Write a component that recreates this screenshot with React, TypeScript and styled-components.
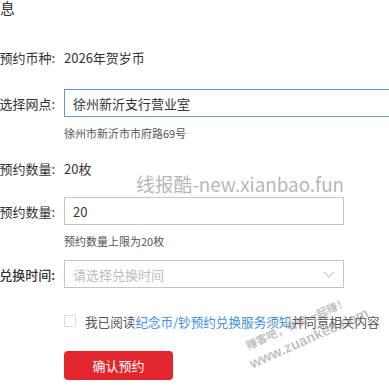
import { createGlobalStyle } from "styled-components"
import styled from "styled-components"

const GlobalStyle = createGlobalStyle`
  html, body {
    margin: 0;
    padding: 0;
    background: #fff;
    overflow: hidden;
  }
  body {
    font-family: "Noto Sans CJK SC", "Noto Sans", sans-serif;
    color: #333;
  }
`

const Page = styled.div`
  position: relative;
  width: 389px;
  height: 391px;
  overflow: hidden;
`

const Title = styled.div`
  font-size: 15px;
  line-height: 15px;
  color: #333;
`

const Row = styled.div<{ $mt: number }>`
  display: flex;
  align-items: center;
  margin-top: ${p => p.$mt}px;
  height: 28px;
  gap: 9px;
`

const Label = styled.div<{ $bold?: boolean }>`
  width: 55px;
  flex: none;
  display: flex;
  justify-content: flex-end;
  white-space: nowrap;
  font-size: 13px;
  color: #333;
  font-weight: ${p => (p.$bold ? 500 : 400)};
`

const Value = styled.div`
  font-size: 13px;
  color: #333;
  white-space: nowrap;
`

const Field = styled.div<{ $active?: boolean; $wide?: boolean }>`
  flex: none;
  box-sizing: border-box;
  width: ${p => (p.$wide ? 400 : 280)}px;
  height: 28px;
  border: 1px solid ${p => (p.$active ? "#5b9bd5" : "#c4c4c4")};
  display: flex;
  align-items: center;
  justify-content: space-between;
  padding: 0 8px 0 8px;
  font-size: 13px;
  color: #333;
  white-space: nowrap;
`

const Placeholder = styled.span`
  color: #bdbdbd;
`

const Hint = styled.div<{ $mt: number }>`
  margin-top: ${p => p.$mt}px;
  margin-left: 64px;
  font-size: 11px;
  line-height: 16px;
  color: #555;
  white-space: nowrap;
`

const AgreeRow = styled.label`
  display: flex;
  align-items: center;
  margin-top: 23px;
  margin-left: 64px;
  height: 20px;
  gap: 9px;
  font-size: 12.6px;
  color: #555;
  white-space: nowrap;
`

const Box = styled.span`
  width: 12px;
  height: 12px;
  box-sizing: border-box;
  border: 1px solid #dcdcdc;
  border-radius: 1px;
  flex: none;
`

const Link = styled.span`
  color: #3f8ee6;
`

const Submit = styled.button`
  display: block;
  margin-top: 20px;
  margin-left: 64px;
  width: 109px;
  height: 29px;
  border: none;
  border-radius: 4px;
  background: #e3262d;
  color: #fff;
  font-family: inherit;
  font-size: 13px;
  padding: 0;
`

const Watermark = styled.div`
  position: absolute;
  left: 136px;
  top: 172px;
  font-size: 18.8px;
  line-height: 24px;
  color: rgba(150, 150, 150, 0.7);
  white-space: nowrap;
  pointer-events: none;
`

const Stamp = styled.div`
  position: absolute;
  left: 236px;
  top: 342px;
  transform: rotate(-24deg);
  transform-origin: 0 0;
  color: rgba(140, 140, 140, 0.55);
  font-family: "Liberation Sans", "Noto Sans CJK SC", sans-serif;
  font-weight: 700;
  white-space: nowrap;
  pointer-events: none;
`

const StampLine = styled.div<{ $size: number; $indent: number; $lh: number }>`
  font-size: ${p => p.$size}px;
  line-height: ${p => p.$lh}px;
  padding-left: ${p => p.$indent}px;
`

const Chevron = () => (
  <svg width="12" height="7" viewBox="0 0 12 7" fill="none">
    <path d="M1 1l5 5 5-5" stroke="#c8c8c8" strokeWidth="1.1" />
  </svg>
)

export default function App() {
  return (
    <Page>
      <GlobalStyle />
      <Title>息</Title>
      <Row $mt={28}>
        <Label>预约币种:</Label>
        <Value>2026年贺岁币</Value>
      </Row>
      <Row $mt={18}>
        <Label>选择网点:</Label>
        <Field $active $wide>徐州新沂支行营业室</Field>
      </Row>
      <Hint $mt={8}>徐州市新沂市市府路69号</Hint>
      <Row $mt={13}>
        <Label>预约数量:</Label>
        <Value>20枚</Value>
      </Row>
      <Row $mt={15}>
        <Label>预约数量:</Label>
        <Field>20</Field>
      </Row>
      <Hint $mt={8}>预约数量上限为20枚</Hint>
      <Row $mt={11}>
        <Label $bold>兑换时间:</Label>
        <Field>
          <Placeholder>请选择兑换时间</Placeholder>
          <Chevron />
        </Field>
      </Row>
      <AgreeRow>
        <Box />
        <span>
          我已阅读<Link>纪念币/钞预约兑换服务须知</Link>并同意相关内容
        </span>
      </AgreeRow>
      <Submit>确认预约</Submit>
      <Watermark>线报酷-new.xianbao.fun</Watermark>
      <Stamp>
        <StampLine $size={11} $lh={17} $indent={8}>赚客吧，有奖一起赚！</StampLine>
        <StampLine $size={14.5} $lh={18} $indent={4}>www.zuanke8.com</StampLine>
      </Stamp>
    </Page>
  )
}
